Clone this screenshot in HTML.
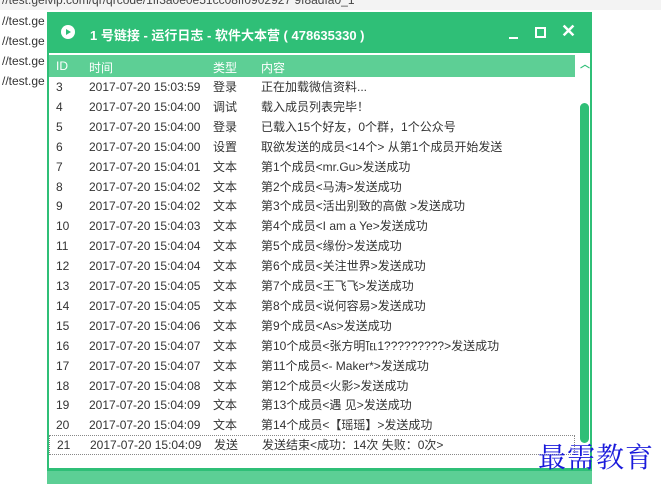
<!DOCTYPE html>
<html><head><meta charset="utf-8"><style>
body{margin:0;width:661px;height:484px;overflow:hidden;background:#fff;font-family:"Liberation Sans","Noto Sans CJK SC",sans-serif;position:relative}
.bg{position:absolute;left:2px;font-size:12px;color:#333}
.win{position:absolute;left:47px;top:12px;width:545px;height:472px;background:#2fbf77}
.title{position:absolute;left:0;top:0;width:545px;height:41px;color:#fff;font-size:13px}
.body{position:absolute;left:2px;top:41px;width:541px;height:415px;background:#fff}
.hdr{position:absolute;left:0;top:2px;width:526px;height:22px;background:#5dcf95;color:#fff;font-size:12px}
.row{position:absolute;left:0;width:526px;height:20px;font-size:12px;color:#333;line-height:20px}
.c{position:absolute;white-space:nowrap}
.btn{position:absolute;left:0;top:459px;width:545px;height:13px;background:#5ccf95}
</style></head><body>
<div style="position:absolute;left:0;top:0;width:661px;height:10px;background:#f3f3f3;overflow:hidden"><div style="font-size:12px;color:#444;margin-top:-7px;margin-left:2px">//test.gelvip.com/qr/qrcode/1ff3a0e0e51cc08ff0902927 9f8adfa0_1</div></div>
<div class="bg" style="top:14px">//test.ge</div>
<div class="bg" style="top:34px">//test.ge</div>
<div class="bg" style="top:54px">//test.ge</div>
<div class="bg" style="top:74px">//test.ge</div>
<div class="win">
 <div class="title">
  <div style="position:absolute;left:14px;top:13px;width:14px;height:14px;border-radius:50%;background:#fff"></div>
  <div style="position:absolute;left:19px;top:17px;width:0;height:0;border-left:5px solid #2fbf77;border-top:3px solid transparent;border-bottom:3px solid transparent"></div>
  <div style="position:absolute;left:43px;top:13px;font-weight:bold">1 号链接 - 运行日志 - 软件大本营 ( 478635330 )</div>
  <div style="position:absolute;left:462px;top:25px;width:9px;height:2px;background:#fff"></div>
  <div style="position:absolute;left:488px;top:15px;width:7px;height:7px;border:2px solid #fff"></div>
  <div style="position:absolute;left:514px;top:9px;font-size:18px;font-weight:bold">✕</div>
 </div>
 <div class="body">
  <div class="hdr"><span class="c" style="left:7px;top:4px">ID</span><span class="c" style="left:40px;top:4px">时间</span><span class="c" style="left:164px;top:4px">类型</span><span class="c" style="left:212px;top:4px">内容</span></div>
  <div style="position:absolute;left:531px;top:3px;color:#2fbf77;font-size:10px;font-weight:bold">︿</div>
  <div style="position:absolute;left:531px;top:50px;width:9px;height:340px;background:#2fbf77;border-radius:5px"></div>
  <div id="rows"></div>
 </div>
 <div class="btn"></div>
</div>
<div style="position:absolute;left:538px;top:436px;font-family:'Noto Serif CJK SC',serif;font-size:28px;color:#1a1adb;letter-spacing:1px">最需教育</div>
<script>
var d=[[3,"15:03:59","登录","正在加载微信资料..."],[4,"15:04:00","调试","载入成员列表完毕！"],[5,"15:04:00","登录","已载入15个好友，0个群，1个公众号"],[6,"15:04:00","设置","取欲发送的成员<14个> 从第1个成员开始发送"],[7,"15:04:01","文本","第1个成员<mr.Gu>发送成功"],[8,"15:04:02","文本","第2个成员<马涛>发送成功"],[9,"15:04:02","文本","第3个成员<活出别致的高傲 >发送成功"],[10,"15:04:03","文本","第4个成员<I am a Ye>发送成功"],[11,"15:04:04","文本","第5个成员<缘份>发送成功"],[12,"15:04:04","文本","第6个成员<关注世界>发送成功"],[13,"15:04:05","文本","第7个成员<王飞飞>发送成功"],[14,"15:04:05","文本","第8个成员<说何容易>发送成功"],[15,"15:04:06","文本","第9个成员<As>发送成功"],[16,"15:04:07","文本","第10个成员<张方明℡1?????????>发送成功"],[17,"15:04:07","文本","第11个成员<- Maker*>发送成功"],[18,"15:04:08","文本","第12个成员<火影>发送成功"],[19,"15:04:09","文本","第13个成员<遇 见>发送成功"],[20,"15:04:09","文本","第14个成员<【瑶瑶】>发送成功"],[21,"15:04:09","发送","发送结束<成功：14次 失败：0次>"]];
function e(s){return s.replace(/&/g,"&amp;").replace(/</g,"&lt;").replace(/>/g,"&gt;")}
var h="";d.forEach(function(r,i){var t=24+i*19.9;var b=r[0]==21?"border:1px dotted #888;box-sizing:border-box;line-height:18px;":"";h+='<div class="row" style="top:'+t+'px;'+b+'"><span class="c" style="left:7px">'+r[0]+'</span><span class="c" style="left:40px">2017-07-20 '+r[1]+'</span><span class="c" style="left:164px">'+r[2]+'</span><span class="c" style="left:212px">'+e(r[3])+'</span></div>'});document.getElementById("rows").innerHTML=h;
</script>
</body></html>
